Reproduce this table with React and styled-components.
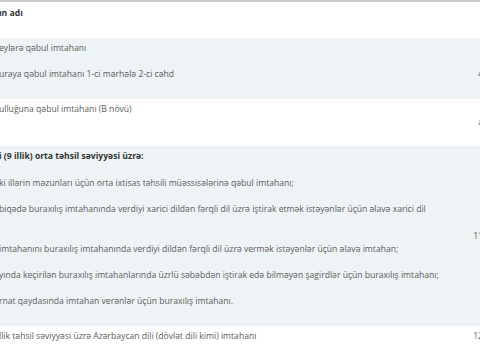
import React from 'react';
import styled, { createGlobalStyle } from 'styled-components';

const GlobalStyle = createGlobalStyle`
  html, body {
    margin: 0;
    padding: 0;
    background: #ffffff;
    overflow: hidden;
  }
  body {
    font-family: "Open Sans", "Liberation Sans", sans-serif;
  }
`;

const Frame = styled.div`
  width: 480px;
  height: 360px;
  overflow: hidden;
  box-sizing: border-box;
  border-top: 2px solid #c9c9c9;
`;

const Table = styled.table`
  border-collapse: collapse;
  table-layout: fixed;
  width: 484px;
  margin-left: -1px;
  font-size: 8.6px;
  line-height: 13.2px;
  color: #5c5c5c;
`;

const Col = styled.col`
  width: ${(p) => p.$w}px;
`;

const Row = styled.tr`
  background: ${(p) => (p.$striped ? '#eef3f6' : '#ffffff')};
`;

const HeadCell = styled.th`
  padding: 5px 0 4.6px;
  text-align: left;
  vertical-align: top;
  font-weight: 700;
  color: #333333;
  white-space: nowrap;
  overflow: hidden;
`;

const Cell = styled.td`
  padding: 4px 0;
  vertical-align: top;
  white-space: nowrap;
  overflow: hidden;
`;

const NumCell = styled.td`
  padding: 4px 0;
  text-align: right;
  vertical-align: ${(p) => (p.$top ? 'top' : 'middle')};
  white-space: nowrap;
`;

// each paragraph is followed by one blank line; $wrap keeps room for a wrapped second line
const Para = styled.p`
  margin: 0 0 13.2px;
  padding-bottom: ${(p) => (p.$wrap ? '13.2px' : '0')};
  font-weight: ${(p) => (p.$bold ? 700 : 'inherit')};
  color: ${(p) => (p.$bold ? '#333333' : 'inherit')};
`;

const levelNine = [
  { text: 'ki illərin məzunları üçün orta ixtisas təhsili müəssisələrinə qəbul imtahanı;' },
  { text: 'biqədə buraxılış imtahanında verdiyi xarici dildən fərqli dil üzrə iştirak etmək istəyənlər üçün əlavə xarici dil', wrap: true },
  { text: ' imtahanını buraxılış imtahanında verdiyi dildən fərqli dil üzrə vermək istəyənlər üçün əlavə imtahan;' },
  { text: 'yında keçirilən buraxılış imtahanlarında üzrlü səbəbdən iştirak edə bilməyən şagirdlər üçün buraxılış imtahanı;' },
  { text: 'rnat qaydasında imtahan verənlər üçün buraxılış imtahanı.' },
];

export default function App() {
  return (
    <Frame>
      <GlobalStyle />
      <Table>
        <colgroup>
          <Col $w={468} />
          <Col $w={16} />
        </colgroup>
        <thead>
          <Row>
            <HeadCell>
              <Para>ın adı</Para>
            </HeadCell>
            <HeadCell />
          </Row>
        </thead>
        <tbody>
          <Row $striped>
            <Cell>
              <Para>eylərə qəbul imtahanı</Para>
              <Para>uraya qəbul imtahanı 1-ci mərhələ 2-ci cəhd</Para>
            </Cell>
            <NumCell $top>
              <Para>&nbsp;</Para>
              <Para>4</Para>
            </NumCell>
          </Row>
          <Row>
            <Cell>
              <Para $wrap>ulluğuna qəbul imtahanı (B növü)</Para>
            </Cell>
            <NumCell>a</NumCell>
          </Row>
          <Row $striped>
            <Cell>
              <Para $bold>i (9 illik) orta təhsil səviyyəsi üzrə:</Para>
              {levelNine.map((item) => (
                <Para key={item.text} $wrap={item.wrap}>
                  {item.text}
                </Para>
              ))}
            </Cell>
            <NumCell>11</NumCell>
          </Row>
          <Row>
            <Cell>
              <Para>llik təhsil səviyyəsi üzrə Azərbaycan dili (dövlət dili kimi) imtahanı</Para>
            </Cell>
            <NumCell $top>12</NumCell>
          </Row>
        </tbody>
      </Table>
    </Frame>
  );
}
